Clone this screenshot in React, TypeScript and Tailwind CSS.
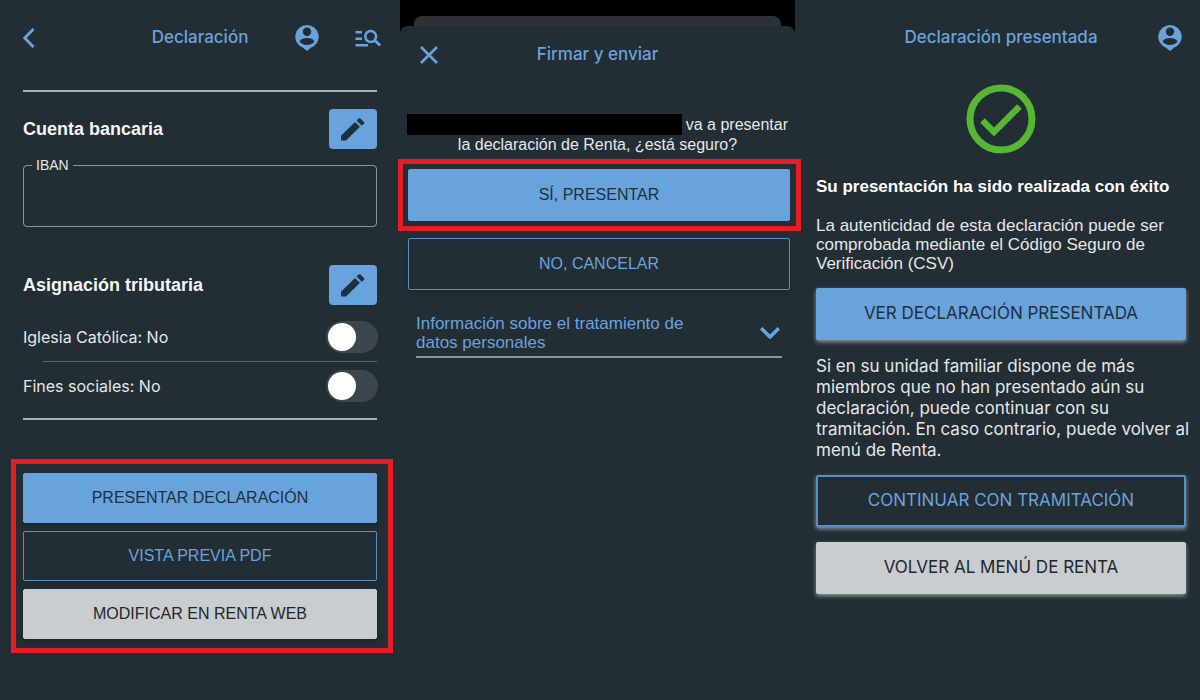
import type { ReactNode } from 'react'

const variants = {
  primary: 'border-[#68a3dc] bg-[#68a3dc] text-[#20303c]',
  outline: 'border-[#5b8fc1] bg-[#232d34] text-[#68a3dc]',
  neutral: 'border-[#c9cdd0] bg-[#c9cdd0] text-[#22272c]',
}

type Variant = keyof typeof variants

function ActionButton({ variant, className, children }: { variant: Variant; className: string; children: ReactNode }) {
  return (
    <button type="button" className={`w-full rounded-xs ${variants[variant]} ${className}`}>
      {children}
    </button>
  )
}

function AccountIcon() {
  return (
    <svg viewBox="0 0 24 26" className="h-[26px] w-6" fill="currentColor" aria-hidden="true">
      <path
        fillRule="evenodd"
        d="M12 0a11.700 11.700 0 0 1 4 22.700L12 26l-4-3.300A11.700 11.700 0 0 1 12 0zM12 2.600a4.200 4.200 0 1 0 0 8.400 4.200 4.200 0 0 0 0-8.400zM4.500 16.200c1.500 2.500 4.300 3.700 7.500 3.700s6-1.200 7.500-3.700c-1.500-2.100-4.200-3.200-7.500-3.200s-6 1.100-7.500 3.200z"
      />
    </svg>
  )
}

function SearchListIcon() {
  return (
    <svg viewBox="0 0 26 18" className="h-[18px] w-[26px]" fill="none" stroke="currentColor" strokeWidth="2.500" aria-hidden="true">
      <path d="M.5 3.300h6.500M.5 9.800h6.500M.5 16.300h12.500" />
      <circle cx="15.700" cy="7.500" r="5.400" />
      <path d="M19.500 11.300l5.600 5.200" strokeWidth="2.900" />
    </svg>
  )
}

function PencilIcon() {
  return (
    <svg viewBox="0 0 24 23" className="h-[23px] w-6" fill="currentColor" aria-hidden="true">
      <path d="M.8 22.500c-.5 0-.8-.3-.8-.8v-3.900L14 4.100l4.900 4.700L5 22.500z" />
      <path d="M15.600 2.600l2-2c.6-.6 1.200-.6 1.800 0L23 4c.6.6.6 1.200 0 1.800l-2.200 2z" />
    </svg>
  )
}

function SectionHeader({ title }: { title: string }) {
  return (
    <div className="flex items-center justify-between">
      <h2 className="text-lg font-bold text-[#f3f5f6]">{title}</h2>
      <button
        type="button"
        aria-label={`Editar ${title}`}
        className="flex h-10 w-12 items-center justify-center rounded-sm bg-[#68a3dc] text-[#20303c]"
      >
        <PencilIcon />
      </button>
    </div>
  )
}

function ToggleRow({ label }: { label: string }) {
  return (
    <label className="-mr-px flex h-8 items-center justify-between font-[Inter,sans-serif] text-base text-[#e4e7e9]">
      {label}
      <input
        type="checkbox"
        role="switch"
        className="h-8 w-[52px] appearance-none rounded-full bg-[#3d464f] before:m-0.5 before:block before:size-7 before:rounded-full before:bg-white before:content-[''] checked:bg-[#68a3dc] checked:before:ml-[22px]"
      />
    </label>
  )
}

function DeclaracionScreen() {
  return (
    <section className="flex flex-col px-[23px] pt-[22px]">
      <header className="grid h-8 grid-cols-[1fr_auto_1fr] items-center text-[#68a3dc]">
        <button type="button" aria-label="Volver" className="justify-self-start">
          <svg viewBox="0 0 12 20" className="h-5 w-3" fill="none" stroke="currentColor" strokeWidth="2.800" aria-hidden="true">
            <path d="M10.500 1L1.800 10l8.700 9" />
          </svg>
        </button>
        <h1 className="font-[Inter,sans-serif] text-[17px] font-medium">Declaración</h1>
        <div className="-mr-1 flex items-center gap-9 justify-self-end">
          <button type="button" aria-label="Mi cuenta">
            <AccountIcon />
          </button>
          <button type="button" aria-label="Buscar">
            <SearchListIcon />
          </button>
        </div>
      </header>

      <hr className="mt-9 border-t-2 border-[#a9afb4]" />

      <div className="mt-[17px]">
        <SectionHeader title="Cuenta bancaria" />
      </div>
      <fieldset className="mt-1.5 h-[72px] rounded-sm border border-[#8d969c] px-1">
        <legend className="ml-1 px-1 text-sm text-[#e4e7e9]">
          <label htmlFor="iban">IBAN</label>
        </legend>
        <input id="iban" type="text" className="w-full bg-transparent px-2 text-white outline-none" />
      </fieldset>

      <div className="mt-[38px]">
        <SectionHeader title="Asignación tributaria" />
      </div>
      <div className="mt-4 flex flex-col">
        <ToggleRow label="Iglesia Católica: No" />
        <hr className="my-2 ml-5 border-[#57616a]" />
        <ToggleRow label="Fines sociales: No" />
      </div>
      <hr className="mt-4 border-t-2 border-[#a9afb4]" />

      <div className="-ml-3 -mr-4 mt-[39px] flex flex-col gap-2 border-[5px] border-[#e81c25] py-[9px] pl-[7px] pr-[11px]">
        <ActionButton variant="primary" className="h-[50px] border text-base shadow-md">PRESENTAR DECLARACIÓN</ActionButton>
        <ActionButton variant="outline" className="h-[50px] border text-base shadow-md">VISTA PREVIA PDF</ActionButton>
        <ActionButton variant="neutral" className="h-[50px] border text-base shadow-md">MODIFICAR EN RENTA WEB</ActionButton>
      </div>
    </section>
  )
}

function FirmarScreen() {
  return (
    <section className="flex flex-col">
      <div className="mr-[5px] bg-black pt-4">
        <div className="mx-[14px] h-2.5 rounded-t-lg bg-[#2a3137]" />
        <div className="h-2 rounded-t-lg bg-[#222d34]" />
      </div>
      <header className="mr-[5px] mt-[7px] grid h-7 grid-cols-[1fr_auto_1fr] items-center px-5 text-[#68a3dc]">
        <button type="button" aria-label="Cerrar" className="justify-self-start">
          <svg viewBox="0 0 18 18" className="size-[18px]" fill="none" stroke="currentColor" strokeWidth="2.600" aria-hidden="true">
            <path d="M1 1l16 16M17 1L1 17" />
          </svg>
        </button>
        <h1 className="font-[Inter,sans-serif] text-[17px] font-medium">Firmar y enviar</h1>
      </header>

      <p className="mr-[5px] mt-[45px] px-[7px] text-center text-base leading-[19px] text-[#e4e7e9]">
        <span className="flex items-center justify-between">
          <span className="h-[21px] w-[275px] bg-black" />
          va a presentar
        </span>
        la declaración de Renta, ¿está seguro?
      </p>

      <div className="-ml-0.5 -mr-px mt-[5px] border-[5px] border-[#e81c25] p-[5px] pr-1.5">
        <ActionButton variant="primary" className="h-[52px] border text-base">SÍ, PRESENTAR</ActionButton>
      </div>
      <div className="mr-[5px] mt-[7px] pl-2 pr-[5px]">
        <ActionButton variant="outline" className="h-[52px] border text-base shadow-md">NO, CANCELAR</ActionButton>
        <button
          type="button"
          aria-expanded="false"
          className="mx-2 mt-6 flex w-[calc(100%-16px)] items-center justify-between border-b-2 border-[#8d969c] pb-1 text-left text-[17px] leading-[19px] text-[#68a3dc]"
        >
          <span className="max-w-[280px]">Información sobre el tratamiento de datos personales</span>
          <svg viewBox="0 0 20 12" className="mr-0.5 h-3 w-5" fill="none" stroke="currentColor" strokeWidth="3.500" aria-hidden="true">
            <path d="M1.200 1.200L10 10l8.800-8.800" />
          </svg>
        </button>
      </div>
    </section>
  )
}

function PresentadaScreen() {
  return (
    <section className="flex flex-col pl-4 pr-[14px] pt-[22px] text-[#e4e7e9]">
      <header className="grid h-8 grid-cols-[1fr_auto_1fr] items-center text-[#68a3dc]">
        <h1 className="col-start-2 font-[Inter,sans-serif] text-[17px] font-medium">Declaración presentada</h1>
        <button type="button" aria-label="Mi cuenta" className="mr-1 justify-self-end">
          <AccountIcon />
        </button>
      </header>

      <svg viewBox="0 0 70 70" className="mx-auto mt-[30px] size-[70px]" fill="none" stroke="#55b733" aria-hidden="true">
        <circle cx="35" cy="35" r="31" strokeWidth="7" />
        <path d="M16.500 36.500L28 48l25.500-25.500" strokeWidth="6.500" />
      </svg>

      <h2 className="mt-[23px] text-[17px] font-bold leading-5 text-white">Su presentación ha sido realizada con éxito</h2>
      <p className="mt-[19px] text-[17px] leading-[19px]">
        La autenticidad de esta declaración puede ser comprobada mediante el Código Seguro de Verificación (CSV)
      </p>
      <ActionButton
        variant="primary"
        className="mt-[15px] h-[52px] border-2 font-[Inter,sans-serif] text-[17px] shadow-[0_2px_4px_#8d969c]"
      >
        VER DECLARACIÓN PRESENTADA
      </ActionButton>
      <p className="-mr-2 mt-4 font-[Inter,sans-serif] text-[17px] leading-[21px]">
        Si en su unidad familiar dispone de más miembros que no han presentado aún su declaración, puede continuar con su
        tramitación. En caso contrario, puede volver al menú de Renta.
      </p>
      <ActionButton
        variant="outline"
        className="mt-[14px] h-[52px] border-2 font-[Inter,sans-serif] text-[17px] shadow-[0_2px_4px_#8d969c]"
      >
        CONTINUAR CON TRAMITACIÓN
      </ActionButton>
      <ActionButton
        variant="neutral"
        className="mt-[15px] h-[52px] border-2 font-[Inter,sans-serif] text-[17px] shadow-[0_2px_4px_#8d969c]"
      >
        VOLVER AL MENÚ DE RENTA
      </ActionButton>
    </section>
  )
}

export default function App() {
  return (
    <main className="grid min-h-screen grid-cols-3 bg-[#222d34] font-['Liberation_Sans',sans-serif]">
      <DeclaracionScreen />
      <FirmarScreen />
      <PresentadaScreen />
    </main>
  )
}
